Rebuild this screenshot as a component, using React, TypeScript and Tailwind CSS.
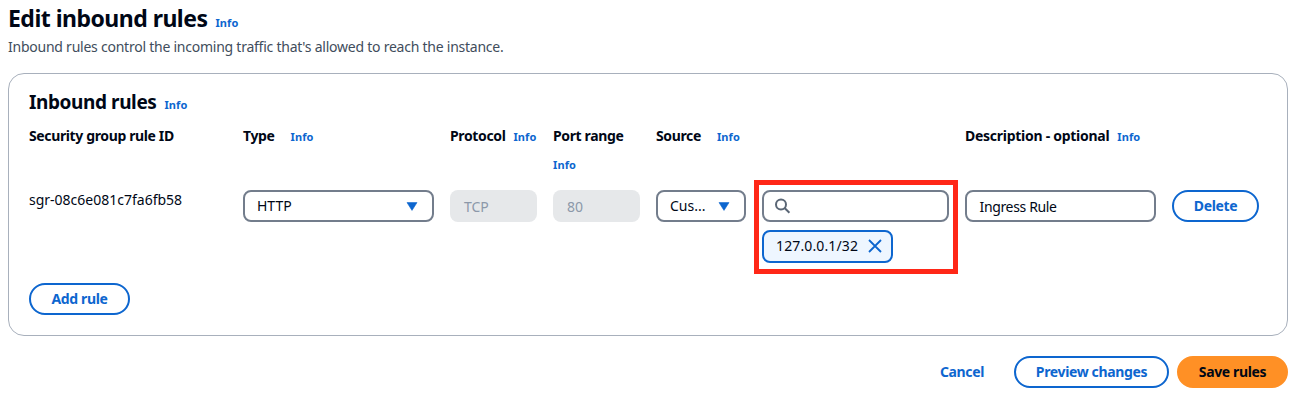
import type { ReactNode } from "react";

function Info({ className = "" }: { className?: string }) {
  return (
    <a className={`text-[11px] leading-5 font-bold tracking-[0.1px] text-[#0d66cf] ${className}`}>Info</a>
  );
}

function Label({ children, className = "tracking-[-0.37px]" }: { children: ReactNode; className?: string }) {
  return (
    <span className={`whitespace-nowrap text-sm leading-5 font-bold ${className}`}>
      {children}
    </span>
  );
}

function Caret() {
  return (
    <svg width="12" height="9" viewBox="0 0 12 9" className="shrink-0">
      <path d="M1 .6h10L6 8.4z" fill="#0d66cf" stroke="#0d66cf" strokeWidth=".6" strokeLinejoin="round" />
    </svg>
  );
}

function Select({ children, className }: { children: ReactNode; className: string }) {
  return (
    <button
      className={`flex h-8 items-center justify-between rounded-lg border-2 border-[#737d8c] bg-white pl-3 text-sm ${className}`}
    >
      <span>{children}</span>
      <Caret />
    </button>
  );
}

function Disabled({ children }: { children: ReactNode }) {
  return (
    <div className="flex h-8 items-center rounded-lg bg-[#e6e8ea] px-[14px] pt-0.5 text-sm text-[#8c98a9]">
      {children}
    </div>
  );
}

function Button({ children, className }: { children: ReactNode; className: string }) {
  return (
    <button
      className={`flex h-8 items-center justify-center rounded-full border-2 text-sm font-bold tracking-[-0.36px] whitespace-nowrap ${className}`}
    >
      {children}
    </button>
  );
}

export default function App() {
  return (
    <main className="h-[400px] bg-white pt-[3px] pr-[7px] pl-2 font-['Noto_Sans',sans-serif] text-[#000716]">
      <header>
        <div className="flex items-baseline gap-2">
          <h1 className="text-[23px] leading-[30px] font-bold tracking-[-0.52px]">
            Edit inbound rules
          </h1>
          <Info />
        </div>
        <p className="mt-1 text-sm leading-5 tracking-[-0.24px] text-[#414d5c]">
          Inbound rules control the incoming traffic that's allowed to reach the instance.
        </p>
      </header>

      <section className="mt-4 h-[263px] rounded-2xl border border-[#a8b0bc] px-5 pt-[14px]">
        <div className="flex h-7 items-baseline gap-2">
          <h2 className="text-[19px] leading-7 font-bold tracking-[-0.4px]">Inbound rules</h2>
          <Info />
        </div>

        <div className="mt-[10px] grid h-16 grid-cols-[214px_207px_103px_103px_309px_1fr] items-start">
          <Label>Security group rule ID</Label>
          <div className="flex items-baseline gap-4">
            <Label>Type</Label>
            <Info />
          </div>
          <div className="flex items-baseline gap-2">
            <Label>Protocol</Label>
            <Info />
          </div>
          <div className="flex flex-col gap-[9px]">
            <Label>Port range</Label>
            <Info />
          </div>
          <div className="flex items-baseline gap-4">
            <Label>Source</Label>
            <Info />
          </div>
          <div className="flex items-baseline gap-2">
            <Label className="tracking-[-0.27px]">Description - optional</Label>
            <Info />
          </div>
        </div>

        <div className="grid h-[93px] grid-cols-[198px_191px_87px_87px_90px_187px_191px_87px] items-start gap-x-4">
          <span className="text-sm leading-5">sgr-08c6e081c7fa6fb58</span>
          <Select className="pr-[14px]">HTTP</Select>
          <Disabled>TCP</Disabled>
          <Disabled>80</Disabled>
          <Select className="pr-[14px]">Cus...</Select>
          <div className="relative flex flex-col items-start gap-2">
            <div className="absolute -top-[10.5px] -left-[8.5px] h-[94px] w-[204px] border-[5px] border-[#ff2717]" />
            <div className="flex h-8 w-full items-center rounded-lg border-2 border-[#737d8c] pl-[11px]">
              <svg width="16" height="16" viewBox="0 0 16 16" fill="none" stroke="#5a6675" strokeWidth="2">
                <circle cx="6" cy="6.4" r="5" />
                <path d="M9.6 10 14.4 14.8" />
              </svg>
            </div>
            <div className="flex h-[33px] w-[131px] items-center justify-between rounded-lg border-2 border-[#0d66cf] bg-[#eef6ff] pr-[9px] pb-px pl-3 text-sm tracking-[0.13px]">
              <span>127.0.0.1/32</span>
              <svg width="14" height="14" viewBox="0 0 14 14" fill="none" stroke="#0d66cf" strokeWidth="1.8">
                <path d="m1 1 12 12M13 1 1 13" />
              </svg>
            </div>
          </div>
          <div className="flex h-8 items-center rounded-lg border-2 border-[#737d8c] px-[12.5px] pt-0.5 text-sm tracking-[-0.35px]">
            Ingress Rule
          </div>
          <Button className="w-[87px] border-[#0d66cf] text-[#0d66cf]">Delete</Button>
        </div>

        <Button className="w-[101px] border-[#0d66cf] text-[#0d66cf]">Add rule</Button>
      </section>

      <footer className="mt-5 flex justify-end">
        <Button className="mr-2 w-[88px] border-transparent text-[#0d66cf]">Cancel</Button>
        <Button className="mr-2 w-[155px] border-[#0d66cf] text-[#0d66cf]">Preview changes</Button>
        <Button className="w-[111px] border-[#ff9025] bg-[#ff9025]">Save rules</Button>
      </footer>
    </main>
  );
}
